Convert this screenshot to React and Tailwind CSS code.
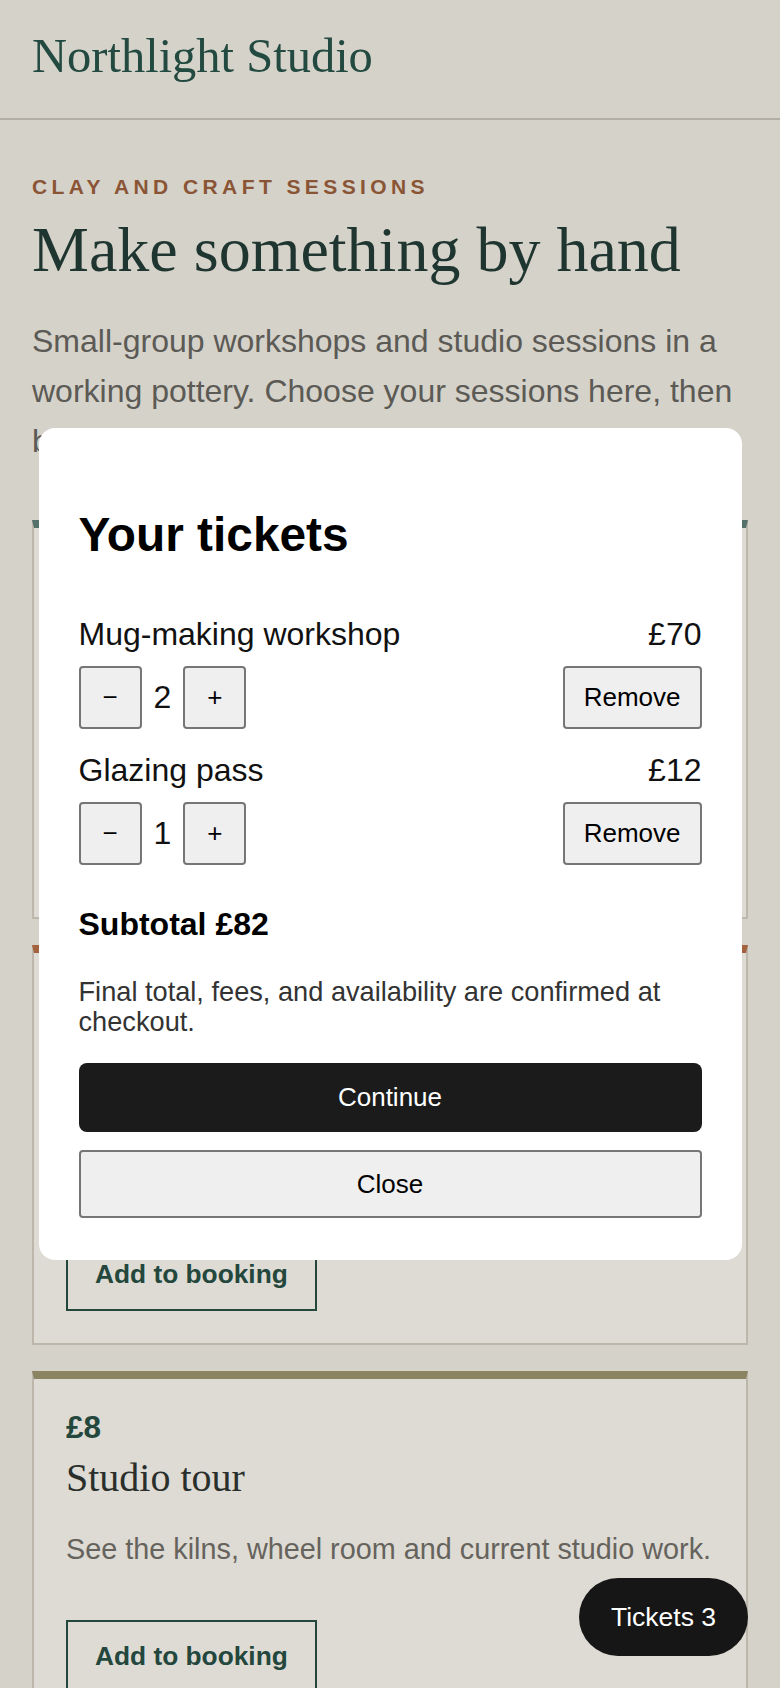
import React from 'react';

const sessions = [
  {
    price: '£35',
    title: 'Mug-making workshop',
    blurb: 'Throw, trim and handle your own mug on the wheel with a resident potter.',
    stripe: 'border-t-[#56706a]',
  },
  {
    price: '£12',
    title: 'Glazing pass',
    blurb: 'Drop in to the glaze bar and finish a piece you have already made.',
    stripe: 'border-t-[#a3613d]',
  },
  {
    price: '£8',
    title: 'Studio tour',
    blurb: 'See the kilns, wheel room and current studio work.',
    stripe: 'border-t-[#8a8463]',
  },
];

const tickets = [
  { name: 'Mug-making workshop', qty: 2, total: '£70' },
  { name: 'Glazing pass', qty: 1, total: '£12' },
];

const greyBtn = 'rounded-[4px] border-2 border-[#767676] bg-[#efefef] text-[26px] text-black';

const SessionCard = ({ price, title, blurb, stripe }) => (
  <article className={`border-2 border-t-8 border-[#bcb7aa] ${stripe} bg-[#dedbd4] p-8`}>
    <p className="text-[31.5px] font-bold leading-8 text-[#24473d]">{price}</p>
    <h2 className="mt-[11px] font-['Liberation_Serif',serif] text-[40px] leading-[48px] text-[#2a2f2b]">
      {title}
    </h2>
    <p className="mt-[26px] text-[28.8px] leading-[1.5] text-[#66635d]">{blurb}</p>
    <button className="mt-[49px] block h-[73px] w-fit border-2 border-[#24473d] px-[27px] text-[26.3px] font-bold text-[#24473d]">
      Add to booking
    </button>
  </article>
);

const TicketRow = ({ name, qty, total }) => (
  <div>
    <div className="flex items-center justify-between text-[32px] leading-[37px] text-[#111]">
      <span>{name}</span>
      <span>{total}</span>
    </div>
    <div className="mt-[13px] flex items-center justify-between">
      <div className="flex items-center gap-3">
        <button className={`${greyBtn} flex h-[63px] w-[63px] items-center justify-center`}>−</button>
        <span className="text-[32px] leading-[37px] text-[#111]">{qty}</span>
        <button className={`${greyBtn} flex h-[63px] w-[63px] items-center justify-center`}>+</button>
      </div>
      <button className={`${greyBtn} h-[63px] px-[19px]`}>Remove</button>
    </div>
  </div>
);

export default function App() {
  return (
    <div className="min-h-screen bg-[#d5d2ca] font-['Liberation_Sans',Arial,sans-serif]">
      <header className="h-[120px] border-b-2 border-[#b3aea5] px-8 pt-7">
        <div className="font-['Liberation_Serif',serif] text-[48.5px] leading-[56px] text-[#234a40]">
          Northlight Studio
        </div>
      </header>

      <main className="px-8 pt-[55px] pb-16">
        <p className="text-[21px] font-bold leading-[24px] tracking-[0.21em] text-[#8a5535]">
          CLAY AND CRAFT SESSIONS
        </p>
        <h1 className="mt-[15px] font-['Liberation_Serif',serif] text-[64px] leading-[72px] text-[#1f3530]">
          Make something by hand
        </h1>
        <p className="mt-[30px] text-[32px] leading-[50px] text-[#5c5a55]">
          Small-group workshops and studio sessions in a working pottery. Choose your sessions here, then
          book and pay at checkout.
        </p>

        <div className="mt-[54px] flex flex-col gap-[26px]">
          {sessions.map((s) => (
            <SessionCard key={s.title} {...s} />
          ))}
        </div>
      </main>

      {/* ticket dialog */}
      <div className="fixed inset-0 flex items-center justify-center">
        <div className="w-[703px] rounded-2xl bg-white px-10 pt-10 pb-[42px]">
          <h2 className="mt-[40px] text-[47.8px] font-bold leading-[54px] text-black">Your tickets</h2>
          <div className="mt-[54px] flex flex-col gap-[23px]">
            {tickets.map((t) => (
              <TicketRow key={t.name} {...t} />
            ))}
          </div>
          <p className="mt-[41px] text-[32px] font-bold leading-[37px] text-black">Subtotal £82</p>
          <p className="mt-[34px] text-[27.2px] leading-[30px] text-[#333]">
            Final total, fees, and availability are confirmed at checkout.
          </p>
          <button className="mt-[26px] block h-[69px] w-full rounded-lg bg-[#1b1b1b] text-[26px] text-white">
            Continue
          </button>
          <button className={`${greyBtn} mt-[18px] block h-[68px] w-full`}>Close</button>
        </div>
      </div>

      <button className="fixed right-8 bottom-8 rounded-full bg-[#161616] px-8 py-6 text-[26.5px] leading-[30px] text-white">
        Tickets 3
      </button>
    </div>
  );
}
